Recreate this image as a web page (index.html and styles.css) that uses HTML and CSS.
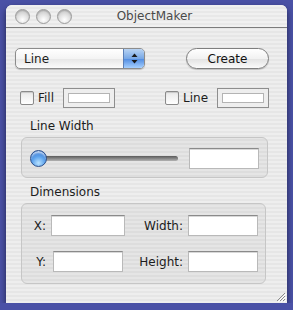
FILE: index.html
```html
<!DOCTYPE html>
<html lang="en">
<head>
    <meta charset="UTF-8">
    <title>ObjectMaker</title>
    <link rel="stylesheet" href="styles.css">
</head>
<body>
    <div class="window">
        <!-- Title bar -->
        <div class="titlebar">
            <div class="lights">
                <span class="light"></span>
                <span class="light"></span>
                <span class="light"></span>
            </div>
            <div class="title">ObjectMaker</div>
        </div>

        <div class="content">
            <div class="row top-row">
                <div class="popup">
                    <span class="popup-label">Line</span>
                    <span class="stepper">
                        <svg width="7" height="11" viewBox="0 0 7 11">
                            <path d="M3.5 0.5 L6.5 4 L0.5 4 Z" fill="#1a1a1a"/>
                            <path d="M3.5 10.5 L6.5 7 L0.5 7 Z" fill="#1a1a1a"/>
                        </svg>
                    </span>
                </div>
                <button class="push">Create</button>
            </div>

            <div class="row wells-row">
                <label class="check"><span class="box"></span>Fill</label>
                <span class="well"><span class="swatch"></span></span>
                <label class="check check-line"><span class="box"></span>Line</label>
                <span class="well"><span class="swatch"></span></span>
            </div>

            <div class="section-label first-label">Line Width</div>
            <div class="group slider-group">
                <div class="slider">
                    <span class="track"></span>
                    <span class="knob"></span>
                </div>
                <input class="field width-field" type="text">
            </div>

            <div class="section-label">Dimensions</div>
            <div class="group dims">
                <div class="dim-row">
                    <span class="dim-label x-label">X:</span>
                    <input class="field xy-field" type="text">
                    <span class="dim-label wide-label">Width:</span>
                    <input class="field" type="text">
                </div>
                <div class="dim-row">
                    <span class="dim-label x-label">Y:</span>
                    <input class="field xy-field y-field" type="text">
                    <span class="dim-label wide-label">Height:</span>
                    <input class="field" type="text">
                </div>
            </div>
        </div>

        <svg class="grip" width="11" height="11" viewBox="0 0 11 11">
            <path d="M10 2 L2 10 M10 5 L5 10 M10 8 L8 10" stroke="#8a8a8a" stroke-width="1"/>
            <path d="M11 3 L3 11 M11 6 L6 11 M11 9 L9 11" stroke="#ffffff" stroke-width="1"/>
        </svg>
    </div>
</body>
</html>
```

FILE: styles.css
```css
/* Desktop + window */
body {
    margin: 0;
    padding: 5px 6px 0 6px;
    background: #4a51a6;
    font-family: 'DejaVu Sans', 'Liberation Sans', sans-serif;
    font-size: 12px;
    color: #1c1c1c;
}

.window {
    position: relative;
    width: 281px;
    height: 298px;
    border-radius: 6px 6px 0 0;
    background: repeating-linear-gradient(#eeeeee 0, #eeeeee 2px, #e6e6e6 2px, #e6e6e6 4px);
    box-shadow: 0 3px 6px rgba(0, 0, 0, 0.55);
    overflow: hidden;
}

.titlebar {
    position: relative;
    height: 22px;
    border-bottom: 1px solid #7b7b7b;
    background: repeating-linear-gradient(#f0f0f0 0, #f0f0f0 2px, #e8e8e8 2px, #e8e8e8 4px);
    display: flex;
    align-items: center;
}

.lights {
    display: flex;
    gap: 6px;
    padding-left: 9px;
}

.light {
    width: 13px;
    height: 13px;
    border-radius: 50%;
    border: 1px solid #9a9a9a;
    background: radial-gradient(circle at 50% 75%, #ffffff 0, #e2e2e2 45%, #b8b8b8 100%);
    box-shadow: inset 0 1px 1px rgba(0, 0, 0, 0.15);
}

.title {
    position: absolute;
    left: 0;
    right: 0;
    top: 4px;
    text-align: center;
    padding-left: 16px;
    color: #4a4a4a;
}

.content {
    padding: 20px 0 0 9px;
}

.row {
    display: flex;
    align-items: center;
}

/* Popup + push button */
.popup {
    width: 128px;
    height: 19px;
    border: 1px solid #8c8c8c;
    border-radius: 5px;
    background: linear-gradient(#ffffff, #f4f4f4 50%, #e6e6e6 51%, #fbfbfb);
    display: flex;
    align-items: center;
    overflow: hidden;
    box-shadow: 0 1px 1px rgba(0, 0, 0, 0.2);
}

.popup-label {
    flex: 1;
    padding-left: 8px;
}

.stepper {
    width: 20px;
    height: 19px;
    border-left: 1px solid #5b7fb6;
    background: linear-gradient(#b8d3f3, #78a8e6 50%, #4e8ae0 51%, #a6d0ff);
    display: flex;
    align-items: center;
    justify-content: center;
}

.push {
    margin-left: 41px;
    width: 83px;
    height: 21px;
    border: 1px solid #7e7e7e;
    border-radius: 11px;
    background: linear-gradient(#ffffff, #f2f2f2 50%, #e2e2e2 51%, #fafafa);
    box-shadow: 0 1px 1px rgba(0, 0, 0, 0.2);
    font: inherit;
    color: #111;
    padding: 0;
}

/* Checkboxes and color wells */
.wells-row {
    margin-top: 19px;
    height: 20px;
}

.check {
    display: flex;
    align-items: center;
    gap: 4px;
    margin-left: 5px;
}

.box {
    width: 12px;
    height: 12px;
    border: 1px solid #8a8a8a;
    border-radius: 2px;
    background: linear-gradient(#e8e8e8, #ffffff);
    box-shadow: inset 0 1px 1px rgba(0, 0, 0, 0.15);
}

.check-line {
    margin-left: 50px;
}

.well {
    margin-left: 9px;
    width: 50px;
    height: 18px;
    border: 1px solid #8e8e8e;
    background: #eeeeee;
    display: flex;
    align-items: center;
    justify-content: center;
}

.swatch {
    width: 40px;
    height: 8px;
    border: 1px solid #b4b4b4;
    background: #ffffff;
}

/* Group boxes */
.section-label {
    margin: 6px 0 0 15px;
    height: 16px;
    line-height: 16px;
}

.first-label {
    margin-top: 10px;
}

.group {
    margin: 3px 0 0 6px;
    width: 245px;
    border: 1px solid #c6c6c6;
    border-radius: 6px;
    background: rgba(0, 0, 0, 0.035);
}

.slider-group {
    height: 39px;
    display: flex;
    align-items: center;
}

.slider {
    position: relative;
    width: 148px;
    height: 16px;
    margin-left: 8px;
}

.track {
    position: absolute;
    left: 2px;
    right: 0;
    top: 6px;
    height: 5px;
    border-radius: 3px;
    background: linear-gradient(#5a5a5a, #8e8e8e 60%, #b2b2b2);
}

.knob {
    position: absolute;
    left: 0;
    top: 0;
    width: 15px;
    height: 15px;
    border-radius: 50%;
    border: 1px solid #2c4f8a;
    background: radial-gradient(circle at 50% 80%, #b8e2ff 0, #5ea3ec 45%, #2a66c6 100%);
    box-shadow: inset 0 3px 2px -1px rgba(255, 255, 255, 0.7);
}

.field {
    box-sizing: border-box;
    height: 21px;
    border: 1px solid #b9b9b9;
    border-top-color: #8a8a8a;
    background: #ffffff;
    width: 70px;
    padding: 0;
    margin: 0;
    box-shadow: inset 0 1px 0 #d8d8d8;
}

.width-field {
    margin-left: 11px;
    margin-top: 1px;
}

.dims {
    display: flex;
    flex-direction: column;
    gap: 15px;
    padding-top: 11px;
    box-sizing: border-box;
    height: 81px;
}

.dim-row {
    display: flex;
    align-items: center;
}

.dim-label {
    text-align: right;
}

.x-label {
    width: 24px;
}

.xy-field {
    margin-left: 5px;
    width: 74px;
}

.y-field {
    margin-left: 7px;
    width: 70px;
}

.wide-label {
    width: 44px;
    margin-left: 14px;
    margin-right: 5px;
}

.y-field + .wide-label {
    margin-left: 16px;
}

.grip {
    position: absolute;
    right: 1px;
    bottom: 1px;
}
```
